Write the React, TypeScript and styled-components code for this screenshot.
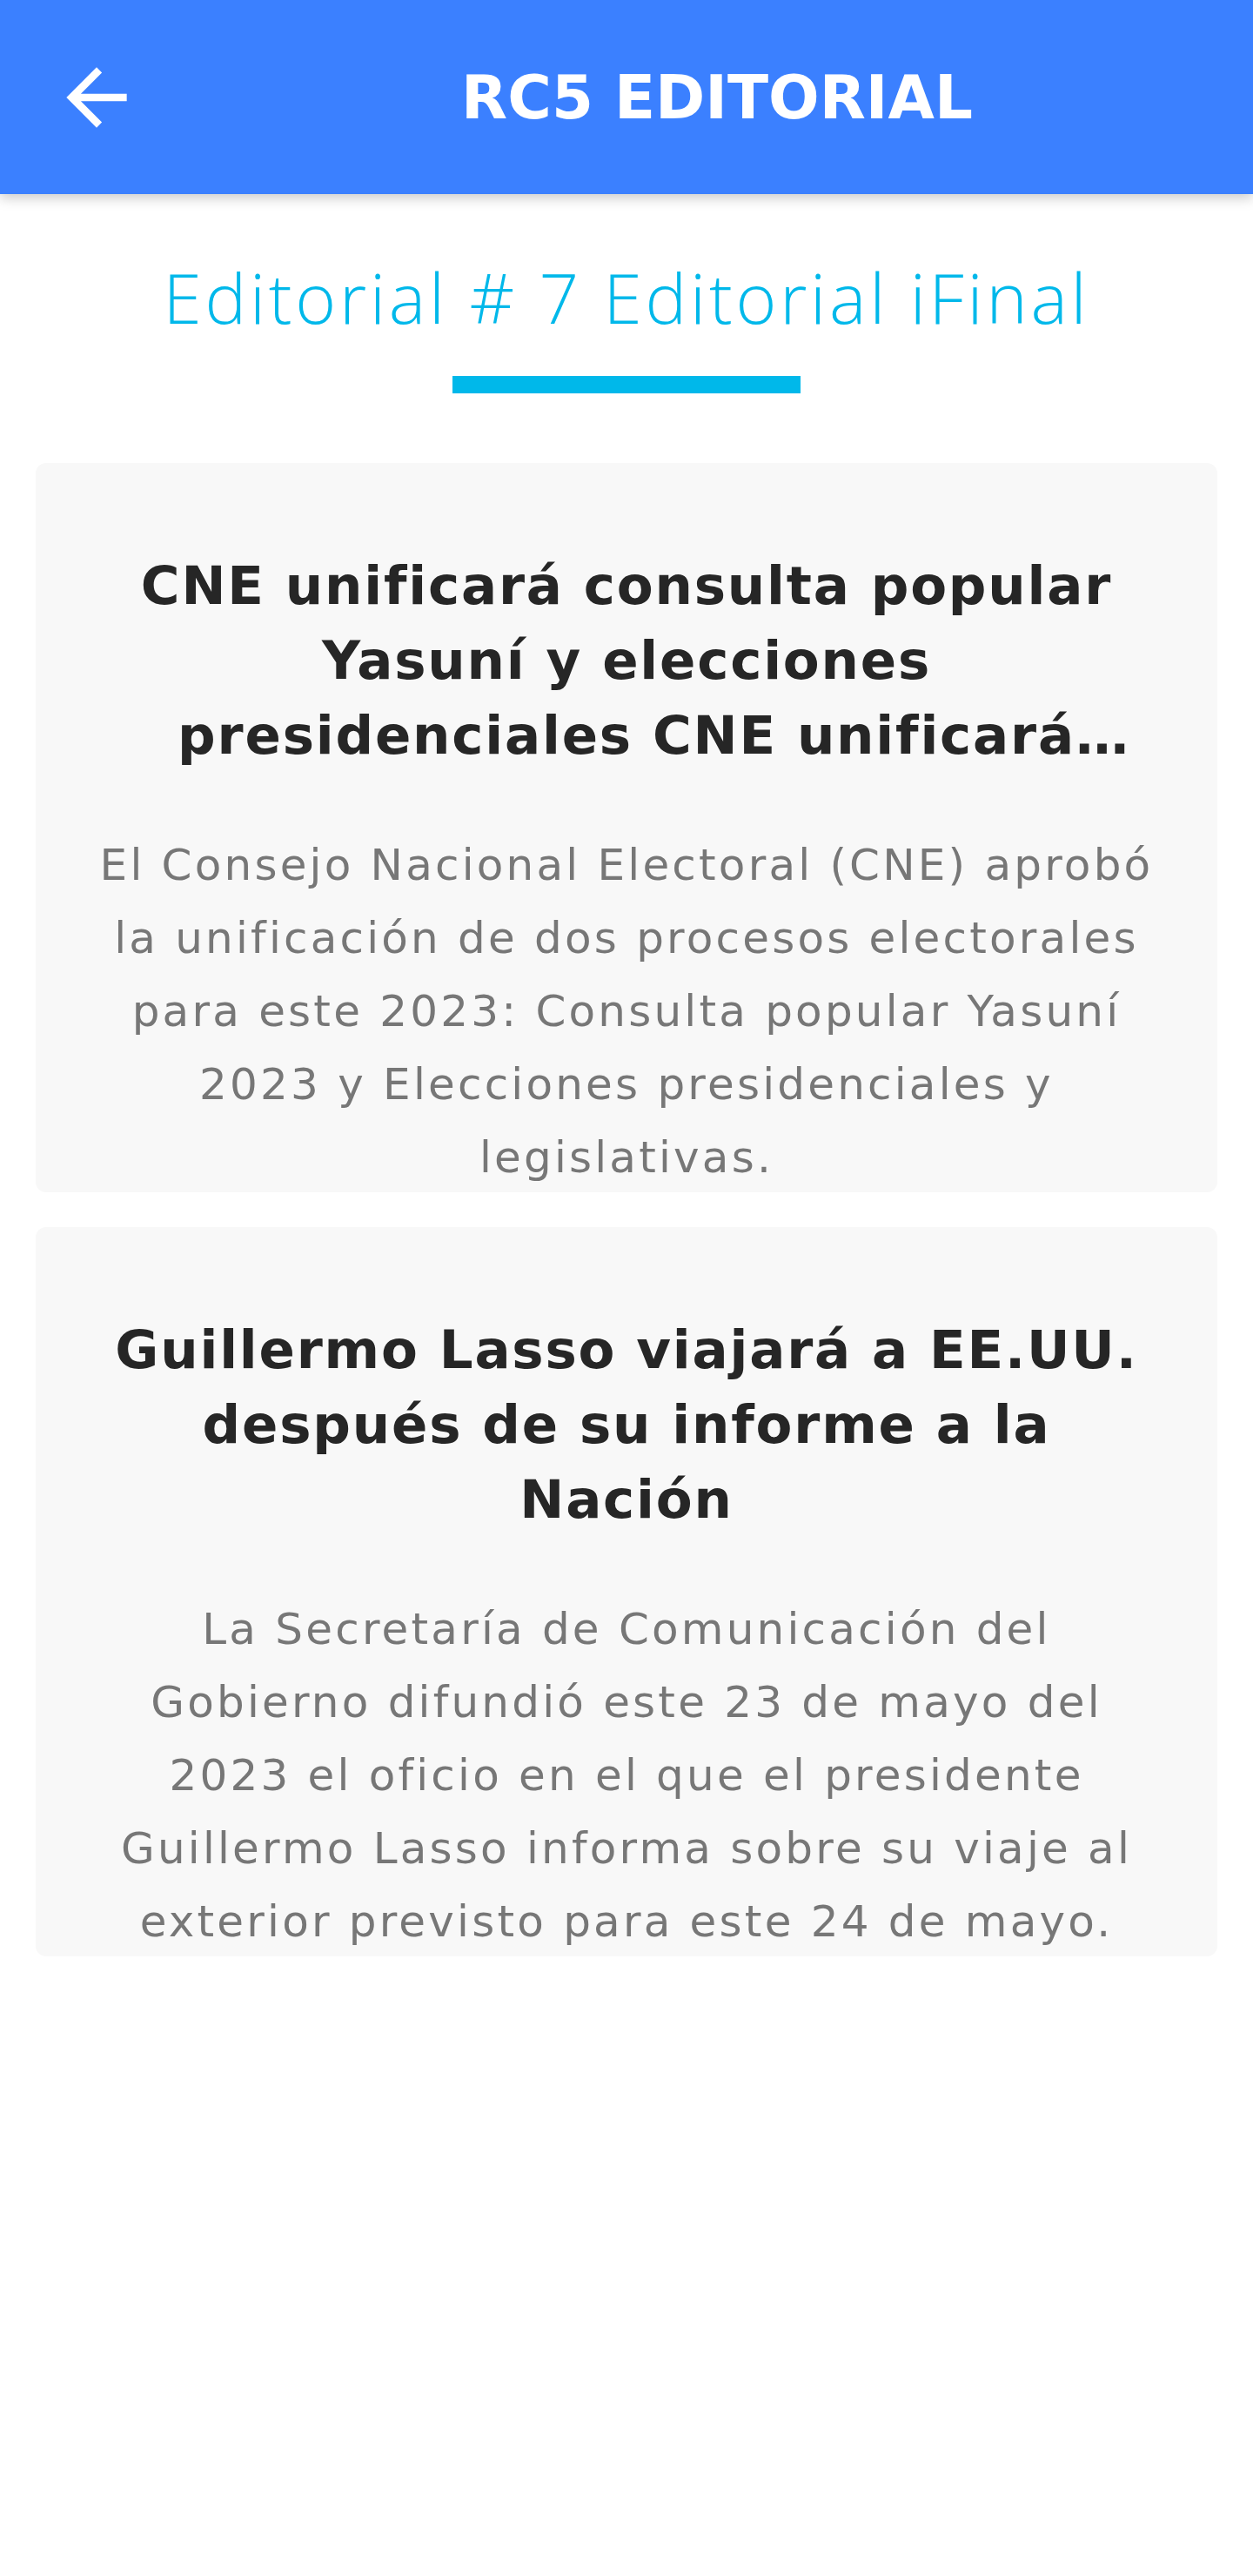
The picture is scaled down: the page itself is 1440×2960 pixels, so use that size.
import React from "react";
import styled, { createGlobalStyle } from "styled-components";

interface Editorial {
	id: number;
	title: string;
	summary: string;
}

const editorials: Editorial[] = [
	{
		id: 1,
		title:
			"CNE unificará consulta popular Yasuní y elecciones presidenciales CNE unificará consulta popular Yasuní y elecciones presidenciales",
		summary:
			"El Consejo Nacional Electoral (CNE) aprobó la unificación de dos procesos electorales para este 2023: Consulta popular Yasuní 2023 y Elecciones presidenciales y legislativas.",
	},
	{
		id: 2,
		title: "Guillermo Lasso viajará a EE.UU. después de su informe a la Nación",
		summary:
			"La Secretaría de Comunicación del Gobierno difundió este 23 de mayo del 2023 el oficio en el que el presidente Guillermo Lasso informa sobre su viaje al exterior previsto para este 24 de mayo.",
	},
];

const GlobalStyle = createGlobalStyle`
	html, body {
		margin: 0;
		padding: 0;
		background: #ffffff;
	}
	body {
		font-family: "DejaVu Sans", "Open Sans", sans-serif;
		-webkit-font-smoothing: antialiased;
	}
	* {
		box-sizing: border-box;
	}
`;

const App: React.FC = () => {
	return (
		<>
			<GlobalStyle />
			<Page>
				<Header>
					<BackButton aria-label="Volver">
						<svg width="104" height="104" viewBox="0 0 24 24" fill="#ffffff">
							<path d="M20 11H7.83l5.59-5.59L12 4l-8 8 8 8 1.41-1.41L7.83 13H20v-2z" />
						</svg>
					</BackButton>
					<HeaderTitle>RC5 EDITORIAL</HeaderTitle>
				</Header>

				<Content>
					<Heading>Editorial # 7 Editorial iFinal</Heading>
					<HeadingBar />

					<CardList>
						{editorials.map((item) => (
							<Card key={item.id}>
								<CardTitle>{item.title}</CardTitle>
								<CardText>{item.summary}</CardText>
							</Card>
						))}
					</CardList>
				</Content>
			</Page>
		</>
	);
};

export default App;

const Page = styled.div`
	width: 1440px;
	min-height: 2960px;
	background: #ffffff;
`;

const Header = styled.header`
	display: flex;
	align-items: center;
	height: 223px;
	background-color: #3b80ff;
	box-shadow: 0 4px 14px rgba(0, 0, 0, 0.22);
	position: relative;
	z-index: 1;
`;

const BackButton = styled.button`
	display: flex;
	align-items: center;
	width: 208px;
	height: 100%;
	padding: 0 0 0 59px;
	border: none;
	background: transparent;
	cursor: pointer;
`;

const HeaderTitle = styled.h1`
	flex: 1;
	margin: 0;
	text-align: center;
	color: #ffffff;
	font-family: "DejaVu Sans", sans-serif;
	font-size: 69px;
	font-weight: 700;
`;

const Content = styled.main`
	display: flex;
	flex-direction: column;
	align-items: center;
	padding: 0 41px;
`;

const Heading = styled.h2`
	margin: 75px 0 0;
	color: #00b8ea;
	font-family: "Open Sans", sans-serif;
	font-size: 80px;
	font-weight: 300;
	line-height: 86px;
	letter-spacing: 3.8px;
	text-align: center;
`;

const HeadingBar = styled.div`
	width: 400px;
	height: 20px;
	margin-top: 48px;
	background-color: #00b8ea;
`;

const CardList = styled.div`
	display: flex;
	flex-direction: column;
	gap: 40px;
	width: 100%;
	margin-top: 80px;
`;

const Card = styled.article`
	height: 838px;
	padding: 98px 64px 0;
	overflow: hidden;
	background-color: #f8f8f8;
	border-radius: 12px;
`;

const CardTitle = styled.h3`
	display: -webkit-box;
	-webkit-line-clamp: 3;
	-webkit-box-orient: vertical;
	overflow: hidden;
	margin: 0;
	padding: 0 15px;
	color: #262626;
	font-size: 61px;
	font-weight: 700;
	line-height: 86px;
	letter-spacing: 1.8px;
	text-align: center;
`;

const CardText = styled.p`
	margin: 64px 0 0;
	color: #777777;
	font-size: 50px;
	font-weight: 400;
	line-height: 84px;
	letter-spacing: 3.2px;
	text-align: center;
`;
